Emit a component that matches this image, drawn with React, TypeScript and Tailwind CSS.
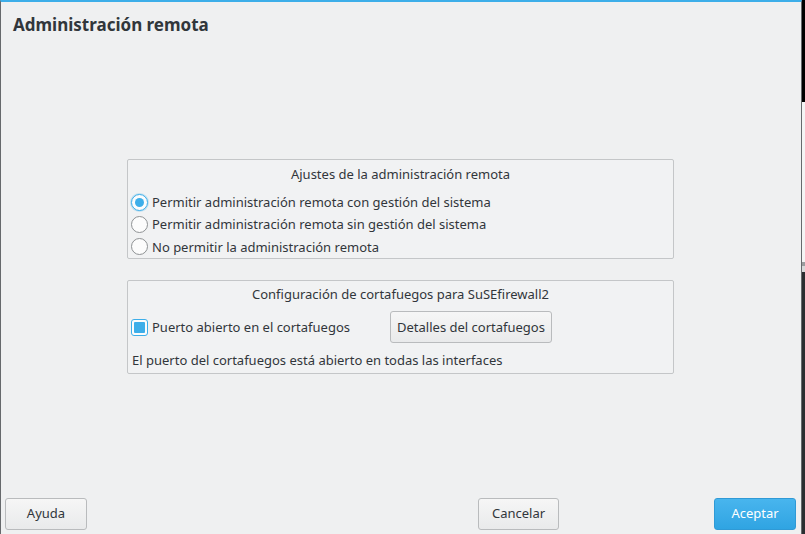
import { useState } from 'react'

const font = { fontFamily: '"Noto Sans", "DejaVu Sans", sans-serif' }

const btn =
  'h-[32px] rounded-[3px] border border-[#b9bbbd] bg-gradient-to-b from-[#f6f6f6] to-[#e9eaeb] text-[13px] text-[#31363b]'

function Radio({ checked, label, onPick }: { checked: boolean; label: string; onPick: () => void }) {
  return (
    <label onClick={onPick} className="flex h-[22.33px] cursor-default items-center gap-[4px] pl-[3px]">
      {checked ? (
        <span className="flex h-[17px] w-[17px] items-center justify-center rounded-full border border-[#3daee9] bg-[#fcfcfc] shadow-[0_0_0_1px_rgba(61,174,233,0.25)]">
          <span className="h-[9px] w-[9px] rounded-full bg-[#3daee9]" />
        </span>
      ) : (
        <span className="h-[17px] w-[17px] rounded-full border border-[#8f9294] bg-[#fcfcfc]" />
      )}
      <span>{label}</span>
    </label>
  )
}

const OPTIONS = [
  'Permitir administración remota con gestión del sistema',
  'Permitir administración remota sin gestión del sistema',
  'No permitir la administración remota',
]

export default function App() {
  const [mode, setMode] = useState(0)
  const [open, setOpen] = useState(true)

  return (
    <div style={font} className="flex h-[534px] w-[805px] overflow-hidden text-[13px] text-[#31363b]">
      <div className="flex w-[802px] flex-col border-x border-t-2 border-x-[#66696c] border-t-[#3daee9] bg-[#eff0f1]">
        <h1 className="px-[12px] pt-[11px] text-[17px] font-bold leading-[24px] text-[#31363b]">
          Administración remota
        </h1>

        <div className="mt-[122px] flex flex-col items-center gap-[21px] pr-[1px]">
          <fieldset className="flex w-[547px] flex-col rounded-[2px] border border-[#c4c6c8] bg-[#f1f2f3]">
            <div className="pt-[5px] text-center leading-[18px]">Ajustes de la administración remota</div>
            <div className="mt-[8px] flex flex-col leading-[18px]">
              {OPTIONS.map((o, i) => (
                <Radio key={o} label={o} checked={mode === i} onPick={() => setMode(i)} />
              ))}
            </div>
          </fieldset>

          <fieldset className="flex w-[547px] flex-col rounded-[2px] border border-[#c4c6c8] bg-[#f1f2f3]">
            <div className="pt-[4px] text-center leading-[18px]">Configuración de cortafuegos para SuSEfirewall2</div>
            <div className="mt-[9px] flex h-[31px] items-center pl-[3px]">
              <label onClick={() => setOpen(!open)} className="flex w-[259px] cursor-default items-center gap-[4px]">
                <span className="flex h-[17px] w-[17px] items-center justify-center rounded-[3px] border border-[#3daee9] bg-[#fcfcfc]">
                  {open && <span className="h-[11px] w-[11px] rounded-[1px] bg-[#3daee9]" />}
                </span>
                <span>Puerto abierto en el cortafuegos</span>
              </label>
              <button className={`${btn} h-[31px] w-[162px]`}>Detalles del cortafuegos</button>
            </div>
            <div className="mt-[8px] pb-[4px] pl-[4px] leading-[18px]">
              El puerto del cortafuegos está abierto en todas las interfaces
            </div>
          </fieldset>
        </div>

        <div className="mt-auto flex items-end pb-[4px] pl-[4px] pr-[5px]">
          <button className={`${btn} w-[82px]`}>Ayuda</button>
          <div className="flex-1" />
          <button className={`${btn} w-[81px]`}>Cancelar</button>
          <div className="w-[155px]" />
          <button className="h-[32px] w-[82px] rounded-[3px] border border-[#2f9ad6] bg-gradient-to-b from-[#48b5ee] to-[#2fa4e2] text-[13px] text-white">
            Aceptar
          </button>
        </div>
      </div>

      <div className="flex flex-1 flex-col">
        <div className="h-[102px] bg-black" />
        <div className="h-[160px] bg-[#f4f4f4]" />
        <div className="h-[4px] bg-[#9a9c9e]" />
        <div className="h-[6px] bg-[#d8d9da]" />
        <div className="flex-1 bg-[#2b2e31]" />
      </div>
    </div>
  )
}
